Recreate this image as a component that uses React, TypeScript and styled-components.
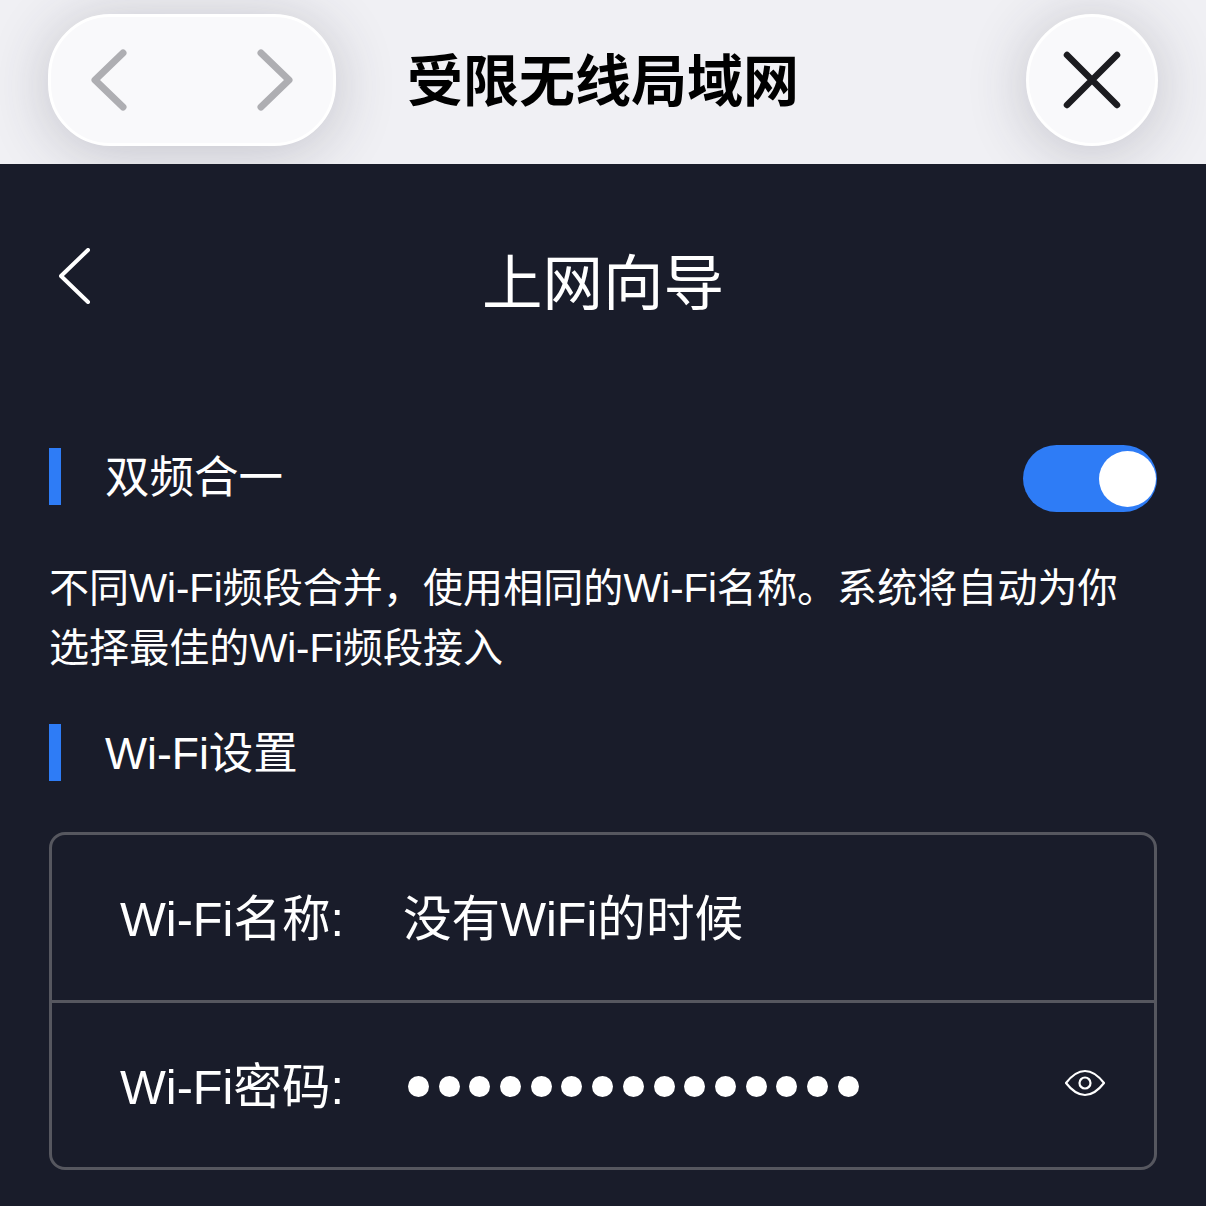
import styled, { createGlobalStyle } from 'styled-components'

const GlobalStyle = createGlobalStyle`
    html, body {
        margin: 0;
        padding: 0;
        width: 1206px;
        height: 1206px;
        overflow: hidden;
        background: #191c2a;
    }
    * {
        box-sizing: border-box;
    }
`

const FONT = `"Liberation Sans", "Noto Sans CJK SC", sans-serif`
const CJK_FONT = `"Noto Sans CJK SC", sans-serif`

export default function App() {
    return (
        <>
            <GlobalStyle />
            <Page>
                <BrowserBar>
                    <NavPill>
                        <svg width="38" height="62" viewBox="0 0 38 62" fill="none">
                            <path d="M33 4 L5 31 L33 58" stroke="#aeaeb2" strokeWidth="7" strokeLinecap="round" strokeLinejoin="round" />
                        </svg>
                        <svg width="38" height="62" viewBox="0 0 38 62" fill="none">
                            <path d="M5 4 L33 31 L5 58" stroke="#aeaeb2" strokeWidth="7" strokeLinecap="round" strokeLinejoin="round" />
                        </svg>
                    </NavPill>
                    <BarTitle>受限无线局域网</BarTitle>
                    <CloseButton>
                        <svg width="60" height="60" viewBox="0 0 60 60" fill="none">
                            <path d="M5 5 L55 55 M55 5 L5 55" stroke="#1c1c20" strokeWidth="6.5" strokeLinecap="round" />
                        </svg>
                    </CloseButton>
                </BrowserBar>

                <Content>
                    <Header>
                        <BackIcon width="32" height="56" viewBox="0 0 32 56" fill="none">
                            <path d="M29 2 L2 28 L29 54" stroke="#ffffff" strokeWidth="4" strokeLinecap="round" strokeLinejoin="round" />
                        </BackIcon>
                        <PageTitle>上网向导</PageTitle>
                    </Header>

                    <SectionHead>
                        <SectionTitle>双频合一</SectionTitle>
                        <Toggle>
                            <Knob />
                        </Toggle>
                    </SectionHead>

                    <Description>
                        不同Wi-Fi频段合并，使用相同的Wi-Fi名称。系统将自动为你
                        <br />
                        选择最佳的Wi-Fi频段接入
                    </Description>

                    <WifiHead>
                        <SectionTitle>Wi-Fi设置</SectionTitle>
                    </WifiHead>

                    <Card>
                        <Row>
                            <Label>Wi-Fi名称:</Label>
                            <Value>没有WiFi的时候</Value>
                        </Row>
                        <Row $divided>
                            <Label>Wi-Fi密码:</Label>
                            <Dots>
                                {Array.from({ length: 15 }).map((_, i) => (
                                    <Dot key={i} />
                                ))}
                            </Dots>
                            <EyeIcon width="42" height="28" viewBox="0 0 42 28" fill="none">
                                <path d="M2 14 C 9 5, 15 2, 21 2 C 27 2, 33 5, 40 14 C 33 23, 27 26, 21 26 C 15 26, 9 23, 2 14 Z" stroke="#ffffff" strokeWidth="2.2" strokeLinejoin="round" />
                                <circle cx="21" cy="14" r="5.5" stroke="#ffffff" strokeWidth="2.2" />
                            </EyeIcon>
                        </Row>
                    </Card>
                </Content>
            </Page>
        </>
    )
}

const Page = styled.div`
    width: 1206px;
    height: 1206px;
    overflow: hidden;
    font-family: ${FONT};
    background: #191c2a;
`

const BrowserBar = styled.div`
    height: 164px;
    display: grid;
    grid-template-columns: 288px 1fr 288px;
    align-items: start;
    padding: 14px 48px 0;
    background: #f0f0f4;
    overflow: hidden;
`

const NavPill = styled.div`
    height: 132px;
    border-radius: 62px;
    display: flex;
    align-items: center;
    justify-content: space-between;
    padding: 0 39px;
    background: #f9f9fb;
    border: 3px solid #ffffff;
    box-shadow: 0 6px 60px rgba(50, 50, 70, 0.24);
`

const BarTitle = styled.div`
    height: 132px;
    line-height: 126px;
    text-align: center;
    font-family: ${CJK_FONT};
    font-size: 56px;
    font-weight: 700;
    color: #000000;
`

const CloseButton = styled.div`
    justify-self: end;
    width: 132px;
    height: 132px;
    border-radius: 50%;
    display: flex;
    align-items: center;
    justify-content: center;
    background: #f9f9fb;
    border: 3px solid #ffffff;
    box-shadow: 0 6px 60px rgba(50, 50, 70, 0.24);
`

const Content = styled.div`
    padding: 0 49px;
`

const Header = styled.div`
    height: 236px;
    display: grid;
    grid-template-columns: 1fr auto 1fr;
    align-items: start;
    padding-top: 84px;
`

const BackIcon = styled.svg`
    margin-left: 10px;
`

const PageTitle = styled.h1`
    margin: 1px 0 0;
    font-size: 60.5px;
    line-height: 70px;
    font-weight: 400;
    color: #ffffff;
`

const SectionHead = styled.div`
    height: 67px;
    margin-top: 45px;
    display: flex;
    align-items: flex-start;
    justify-content: space-between;

    & > div:first-child {
        margin-top: 3px;
    }
`

const SectionTitle = styled.div`
    height: 57px;
    line-height: 60px;
    padding-left: 44px;
    border-left: 12px solid #2e7cf6;
    font-size: 44.5px;
    font-weight: 400;
    color: #ffffff;
`

const Toggle = styled.div`
    width: 134px;
    height: 67px;
    border-radius: 34px;
    display: flex;
    align-items: center;
    justify-content: flex-end;
    padding-right: 1px;
    background: #2e7cf6;
`

const Knob = styled.div`
    width: 57px;
    height: 56px;
    border-radius: 50%;
    background: #ffffff;
`

const Description = styled.p`
    margin: 46px 0 0;
    font-size: 40.1px;
    line-height: 60px;
    font-weight: 400;
    color: #ffffff;
    white-space: nowrap;
`

const WifiHead = styled.div`
    margin-top: 46px;
`

const Card = styled.div`
    margin-top: 51px;
    height: 338px;
    border: 3px solid #56575f;
    border-radius: 16px;
    display: flex;
    flex-direction: column;
`

const Row = styled.div<{ $divided?: boolean }>`
    flex: 1;
    display: flex;
    align-items: center;
    padding: 0 48px 0 68px;
    border-top: ${(p) => (p.$divided ? '3px solid #56575f' : 'none')};
`

const Label = styled.div`
    width: 283px;
    margin-bottom: 4px;
    font-size: 48.6px;
    font-weight: 400;
    color: #ffffff;
    white-space: nowrap;
`

const Value = styled.div`
    margin-bottom: 4px;
    font-size: 48.6px;
    font-weight: 400;
    color: #ffffff;
    white-space: nowrap;
`

const Dots = styled.div`
    display: flex;
    gap: 9.7px;
    margin: 4px 0 0 5px;
`

const Dot = styled.span`
    width: 21px;
    height: 21px;
    border-radius: 50%;
    background: #ffffff;
`

const EyeIcon = styled.svg`
    margin: -4px 0 0 auto;
`
